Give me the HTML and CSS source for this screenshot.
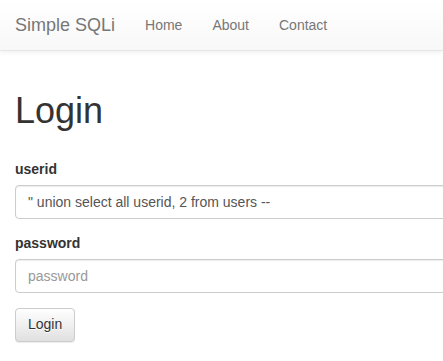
FILE: index.html
```
<!DOCTYPE html>
<html>
<head>
<meta charset="utf-8">
<link rel="stylesheet" href="styles.css">
</head>
<body>
<nav class="navbar">
  <div class="nav-inner">
    <a class="brand" href="#">Simple SQLi</a>
    <ul class="nav-links">
      <li><a href="#">Home</a></li>
      <li><a href="#">About</a></li>
      <li><a href="#">Contact</a></li>
    </ul>
  </div>
</nav>
<main class="container">
  <h1 class="title">Login</h1>
  <form class="login-form">
    <div class="form-group">
      <label class="label" for="userid">userid</label>
      <input class="input" id="userid" type="text" value="&quot; union select all userid, 2 from users --">
    </div>
    <div class="form-group">
      <label class="label" for="password">password</label>
      <input class="input" id="password" type="password" placeholder="password">
    </div>
    <div class="form-group">
      <button class="btn" type="button">Login</button>
    </div>
  </form>
</main>
</body>
</html>
```
FILE: styles.css
```
html, body {
  overflow: hidden;
}
body {
  margin: 0;
  font-family: "Liberation Sans", Arial, sans-serif;
  font-size: 14px;
  line-height: 1.42857;
  color: #333;
  background: #fff;
}
.navbar {
  height: 50px;
  background-image: linear-gradient(to bottom, #fff 0, #f8f8f8 100%);
  border-bottom: 1px solid #e7e7e7;
  box-shadow: inset 0 1px 0 rgba(255,255,255,.15), 0 1px 5px rgba(0,0,0,.075);
}
.nav-inner {
  display: flex;
  align-items: center;
  height: 50px;
}
.brand {
  padding: 15px;
  font-size: 18px;
  line-height: 20px;
  color: #777;
  text-decoration: none;
  text-shadow: 0 1px 0 rgba(255,255,255,.25);
}
.nav-links {
  display: flex;
  list-style: none;
  margin: 0;
  padding: 0;
}
.nav-links a {
  display: block;
  padding: 15px;
  line-height: 20px;
  color: #777;
  text-decoration: none;
  text-shadow: 0 1px 0 rgba(255,255,255,.25);
}
.container {
  padding: 20px 0 0 15px;
  overflow: hidden;
}
.title {
  margin: 20px 0 0;
  font-size: 36px;
  font-weight: 500;
  line-height: 1.1;
}
.login-form {
  margin-top: 29px;
  width: 700px;
}
.form-group {
  margin-bottom: 15px;
}
.label {
  display: inline-block;
  margin-bottom: 5px;
  font-weight: 700;
}
.input {
  display: block;
  box-sizing: border-box;
  width: 100%;
  height: 34px;
  padding: 6px 12px;
  font-family: inherit;
  font-size: 14px;
  line-height: 1.42857;
  color: #555;
  background: #fff;
  border: 1px solid #ccc;
  border-radius: 4px;
  box-shadow: inset 0 1px 1px rgba(0,0,0,.075);
  outline: none;
}
.input::placeholder {
  color: #999;
}
.btn {
  height: 34px;
  padding: 6px 12px;
  font-family: inherit;
  font-size: 14px;
  line-height: 1.42857;
  color: #333;
  background-image: linear-gradient(to bottom, #fff 0, #e0e0e0 100%);
  border: 1px solid #ccc;
  border-radius: 4px;
  text-shadow: 0 1px 0 #fff;
  box-shadow: inset 0 1px 0 rgba(255,255,255,.15), 0 1px 1px rgba(0,0,0,.075);
}
```
